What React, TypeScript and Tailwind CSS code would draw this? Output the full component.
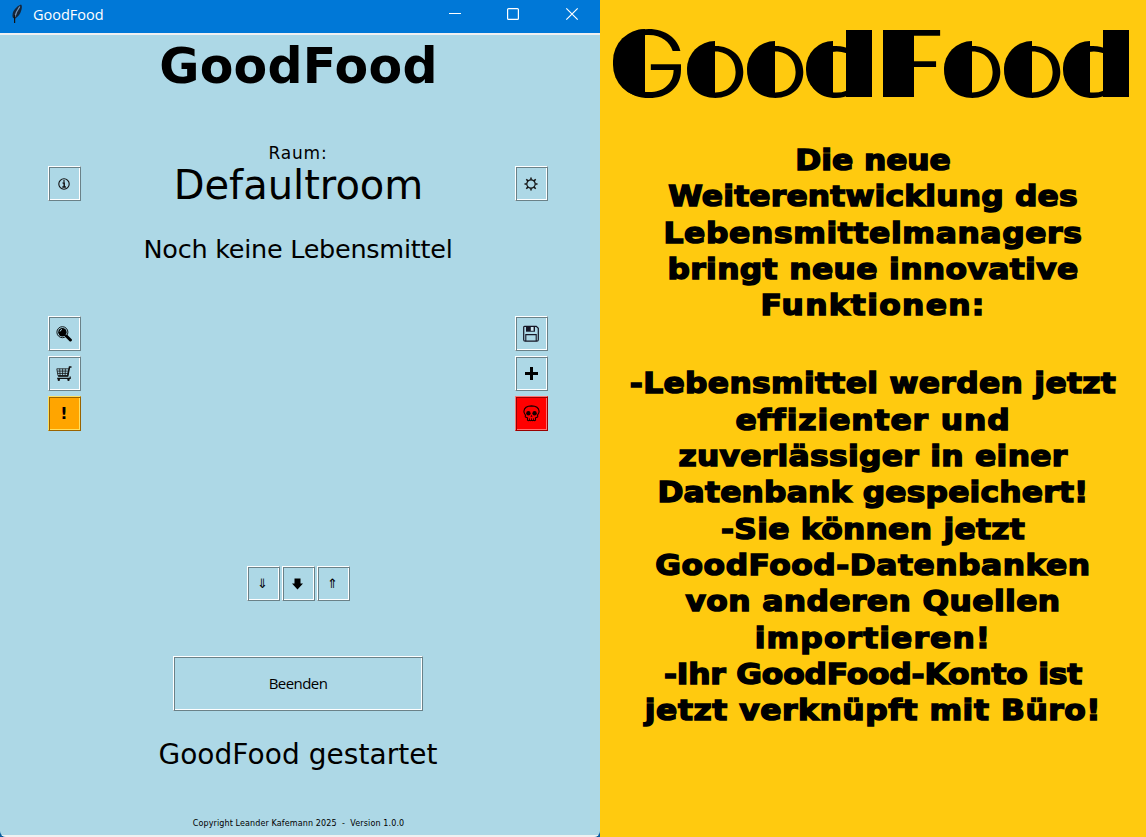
import { ReactNode, useLayoutEffect, useRef, useState } from "react";

/* One line of text, tracked so that it fills the given width. */
function FitLine({ text, width, className = "" }: { text: string; width: number; className?: string }) {
  const ref = useRef<HTMLSpanElement>(null);
  const [spacing, setSpacing] = useState(0);
  useLayoutEffect(() => {
    if (ref.current) {
      const natural = ref.current.offsetWidth;
      setSpacing((width - natural) / text.length);
    }
  }, [text, width]);
  return (
    <div className={"flex justify-center whitespace-pre " + className}>
      <span ref={ref} style={{ letterSpacing: spacing }}>{text}</span>
    </div>
  );
}

const ridge =
  "flex items-center justify-center border border-t-white border-l-white border-r-[#6a8188] border-b-[#6a8188] shadow-[inset_1px_1px_0_#6a8188,inset_-1px_-1px_0_#ffffff]";

function ToolButton({ label, tone = "plain", children }: { label: string; tone?: "plain" | "warn" | "danger"; children: ReactNode }) {
  const tones = {
    plain: ridge,
    warn: "flex items-center justify-center bg-[#ffa500] border border-t-[#ffdf60] border-l-[#ffdf60] border-r-[#996300] border-b-[#996300] shadow-[inset_1px_1px_0_#996300,inset_-1px_-1px_0_#ffdf60]",
    danger: "flex items-center justify-center bg-[#ff0000] border border-t-[#ff7070] border-l-[#ff7070] border-r-[#990000] border-b-[#990000] shadow-[inset_1px_1px_0_#990000,inset_-1px_-1px_0_#ff7070]",
  };
  return (
    <button aria-label={label} className={"h-[35px] w-[33px] shrink-0 pr-px " + tones[tone]}>
      {children}
    </button>
  );
}

const Info = () => (
  <svg width="12" height="12" viewBox="0 0 12 12" fill="none" stroke="#111">
    <circle cx="6" cy="6" r="5.2" strokeWidth="1.1" />
    <path d="M6 2.2v1.6M4.6 5h1.6v4M4.3 9h3.6" strokeWidth="1.5" />
  </svg>
);
const Sun = () => (
  <svg width="14" height="14" viewBox="0 0 14 14" fill="none" stroke="#111">
    <circle cx="7" cy="7" r="4.2" strokeWidth="1.2" />
    <path d="M7 .5v2.2M7 11.3v2.2M.5 7h2.2M11.3 7h2.2M2.3 2.3l1.6 1.6M10.1 10.1l1.6 1.6M2.3 11.7l1.6-1.6M10.1 3.9l1.6-1.6" strokeWidth="1.5" />
  </svg>
);
const Magnifier = () => (
  <svg width="16" height="16" viewBox="0 0 16 16" fill="none" stroke="#000">
    <circle cx="6.4" cy="6.2" r="5.5" strokeWidth=".9" />
    <circle cx="6.4" cy="6.2" r="4.2" fill="#000" stroke="none" />
    <path d="M4 5.5Q4.3 3.8 6 3.5" stroke="#add8e6" strokeWidth="1" />
    <path d="M10.4 10l4 4" strokeWidth="3" strokeLinecap="round" />
  </svg>
);
const Cart = () => (
  <svg width="16" height="16" viewBox="0 0 16 16" fill="none" stroke="#111">
    <path d="M15.5 1h-2l-1.8 9H2.2" strokeWidth="1.5" />
    <path d="M.8 2.8h12l-1 7H2zM3.700 2.800l.4 7M6.600 2.800v7M9.400 2.800l-.3 7M1.200 5.100h11.500M1.500 7.400h11" strokeWidth=".8" />
    <path d="M1.2 12.3h13V10.5" strokeWidth="1.2" />
    <circle cx="2.8" cy="13.8" r="1.2" fill="#111" stroke="none" />
    <circle cx="12.5" cy="13.8" r="1.2" fill="#111" stroke="none" />
  </svg>
);
const Floppy = () => (
  <svg width="18" height="18" viewBox="0 0 18 18" fill="none" stroke="#151525">
    <path d="M2.5 1.3h11.8l2 2v11.4q0 1.5-1.5 1.5H3.2q-1.5 0-1.5-1.5V2.3q0-1 .8-1z" strokeWidth="1.2" />
    <path d="M4 1.3h9v5.4H4z" fill="#151525" stroke="none" />
    <path d="M8.8 2h2.8v3.8H8.8z" fill="#cfe9f2" stroke="none" />
    <path d="M3.8 16V9.6h10.4V16" strokeWidth="1.1" />
  </svg>
);
const Skull = () => (
  <svg width="17" height="17" viewBox="0 0 17 17" fill="none" stroke="#160000">
    <path d="M4.500 15.200v-2.400L2.400 12q-.5-1 .1-1.900Q.8 8.300.9 6.300 1.500 1 8.500.9q7 .1 7.600 5.400.1 2-1.600 3.800.6.900.1 1.900l-2.100.8v2.400q-1 1-2 0-1 1-2 0-1 1-2 0-1 1-2 0z" strokeWidth="1.1" />
    <circle cx="5.4" cy="8.2" r="2.2" fill="#160000" stroke="none" />
    <circle cx="11.6" cy="8.2" r="2.2" fill="#160000" stroke="none" />
    <path d="M8.5 9.8l-1 1.900h2z" fill="#160000" stroke="none" />
    <path d="M6.500 13.300v2M8.500 13.300v2M10.500 13.300v2" strokeWidth=".8" />
  </svg>
);
const Feather = () => (
  <svg width="12" height="20" viewBox="0 0 12 20">
    <path d="M10 .5q1.500 1 .4 5.500Q9 11.500 4.300 14.500L2 14Q.3 9 4 5 7 1.300 10 .5z" fill="#15263b" />
    <path d="M8.800 2.500Q5 8 3.800 13" fill="none" stroke="#7794b5" strokeWidth="1.3" />
    <path d="M3.600 11L3.600 19" stroke="#111" strokeWidth="1.2" />
  </svg>
);

/* Display letters: thin outlines with one half inked solid. */
const RoundLetter = () => (
  <span className="relative flex w-[60px] justify-center">
    <span className="absolute left-[2px] top-[27px] h-[56px] w-[28px] rounded-l-full bg-black" />
    <span className="relative scale-x-[1.26] font-light">o</span>
  </span>
);
const StemLetter = () => (
  <span className="relative flex w-[68px] justify-center">
    <span className="absolute left-[1px] top-[27px] h-[56px] w-[27px] rounded-l-full bg-black" />
    <span className="absolute right-[1px] top-[16px] h-[67px] w-[26px] bg-black" />
    <span className="relative scale-x-[1.35] font-light">d</span>
  </span>
);

const intro: [string, number][] = [
  ["Die neue", 155],
  ["Weiterentwicklung des", 410],
  ["Lebensmittelmanagers", 419],
  ["bringt neue innovative", 411],
  ["Funktionen:", 225],
];
const features: [string, number][] = [
  ["-Lebensmittel werden jetzt", 486],
  ["effizienter und", 272],
  ["zuverlässiger in einer", 389],
  ["Datenbank gespeichert!", 431],
  ["-Sie können jetzt", 304],
  ["GoodFood-Datenbanken", 435],
  ["von anderen Quellen", 375],
  ["importieren!", 236],
  ["-Ihr GoodFood-Konto ist", 418],
  ["jetzt verknüpft mit Büro!", 456],
];

/* The poster text is stretched horizontally by this factor. */
const STRETCH = 1.08;

export default function App() {
  return (
    <div className="flex h-[837px] w-[1146px] overflow-hidden bg-[#08599c] text-black">
      <main className="flex w-[600px] flex-col overflow-hidden rounded-b-[6px] bg-[#add8e6] font-['DejaVu_Sans',sans-serif]">
        <header className="flex h-[33px] shrink-0 items-start bg-[#0078d7] pl-[11px] text-white">
          <div className="pt-[4px]"><Feather /></div>
          <FitLine text="GoodFood" width={71} className="ml-[10px] h-[30px] font-['Open_Sans',sans-serif] text-[14.5px] leading-[29px]" />
          <svg className="ml-auto mr-[21px] mt-[7px]" width="131" height="14" fill="none" stroke="white" strokeWidth="1.2">
            <path d="M1 6.5h12" strokeWidth="1" />
            <rect x="59.6" y="1.6" width="10.8" height="10.8" rx="1" />
            <path d="M118.3 1.3l11.400 11.400M129.700 1.300l-11.400 11.400" />
          </svg>
        </header>
        <div className="h-[2px] shrink-0 bg-[#f0f0f0]" />
        <section className="flex h-[800px] shrink-0 pl-[48px] pr-[52px]">
          <nav className="flex w-[33px] flex-col gap-[5px] pt-[131px]">
            <div className="mb-[110px] flex"><ToolButton label="Info"><Info /></ToolButton></div>
            <ToolButton label="Suchen"><Magnifier /></ToolButton>
            <ToolButton label="Einkauf"><Cart /></ToolButton>
            <ToolButton label="Warnung" tone="warn"><span className="text-[16px] font-bold leading-none">!</span></ToolButton>
          </nav>
          <div className="flex w-[434px] flex-col items-center">
            <FitLine text="GoodFood" width={279} className="mt-[2px] h-[60px] pl-px text-[49px] font-bold leading-[60px]" />
            <FitLine text="Raum:" width={59} className="mt-[47px] h-[18px] text-[17px] leading-[18px]" />
            <FitLine text="Defaultroom" width={250} className="mt-[3px] h-[40px] pl-px text-[40px] leading-[40px]" />
            <FitLine text="Noch keine Lebensmittel" width={309} className="mt-[29px] h-[30px] text-[25.5px] leading-[30px]" />
            <div className="mt-[302px] flex gap-[2px]">
              <ToolButton label="Runter"><span className="text-[13px] leading-none">⇓</span></ToolButton>
              <ToolButton label="Ganz runter">
                <svg width="11" height="12" viewBox="0 0 11 12"><path d="M2.5 .5h6v5h2.5L5.5 11.5 0 5.500h2.500z" /></svg>
              </ToolButton>
              <ToolButton label="Hoch"><span className="text-[13px] leading-none">⇑</span></ToolButton>
            </div>
            <button className={"mt-[55px] h-[55px] w-[250px] shrink-0 pb-[2px] " + ridge}>
              <FitLine text="Beenden" width={59} className="font-['Open_Sans',sans-serif] text-[15px] leading-[20px]" />
            </button>
            <FitLine text="GoodFood gestartet" width={279} className="mt-[24px] h-[40px] text-[28px] leading-[40px]" />
            <FitLine text="Copyright Leander Kafemann 2025  -  Version 1.0.0" width={212} className="mt-[42px] h-[14px] pl-px text-[8px] leading-[14px]" />
          </div>
          <nav className="flex w-[33px] flex-col gap-[5px] pt-[131px]">
            <div className="mb-[110px] flex"><ToolButton label="Einstellungen"><Sun /></ToolButton></div>
            <ToolButton label="Speichern"><Floppy /></ToolButton>
            <ToolButton label="Neu">
              <svg width="13" height="13" viewBox="0 0 13 13"><path d="M6.5 0v13M0 6.5h13" stroke="black" strokeWidth="3" /></svg>
            </ToolButton>
            <ToolButton label="Entfernen" tone="danger"><Skull /></ToolButton>
          </nav>
        </section>
        <div className="h-[2px] shrink-0 bg-[#f0f0f0]" />
      </main>
      <aside className="flex w-[546px] flex-col bg-[#ffca0f]">
        <h1 className="mt-[14px] flex h-[100px] pl-[11px] font-['Inter',sans-serif] text-[92px] leading-[100px]">
          <span className="relative flex w-[74px] justify-center">
            <span className="absolute left-[2px] top-[15px] h-[68px] w-[32px] rounded-l-full bg-black" />
            <span className="relative scale-x-[1.18] font-light">G</span>
          </span>
          <RoundLetter />
          <RoundLetter />
          <StemLetter />
          <span className="relative flex w-[69px] justify-center pl-[12px]">
            <span className="absolute left-[10px] top-[16px] h-[67px] w-[31px] bg-black" />
            <span className="relative scale-x-[1.3] font-light">F</span>
          </span>
          <RoundLetter />
          <RoundLetter />
          <StemLetter />
        </h1>
        <div className="mt-[28px] scale-x-[1.08] font-['DejaVu_Sans',sans-serif] text-[29px] font-bold leading-[36.3px] [-webkit-text-stroke:1.5px_black]">
          {intro.map(([t, w]) => <FitLine key={t} text={t} width={w / STRETCH} />)}
          <div className="h-[42px]" />
          {features.map(([t, w]) => <FitLine key={t} text={t} width={w / STRETCH} />)}
        </div>
      </aside>
    </div>
  );
}
